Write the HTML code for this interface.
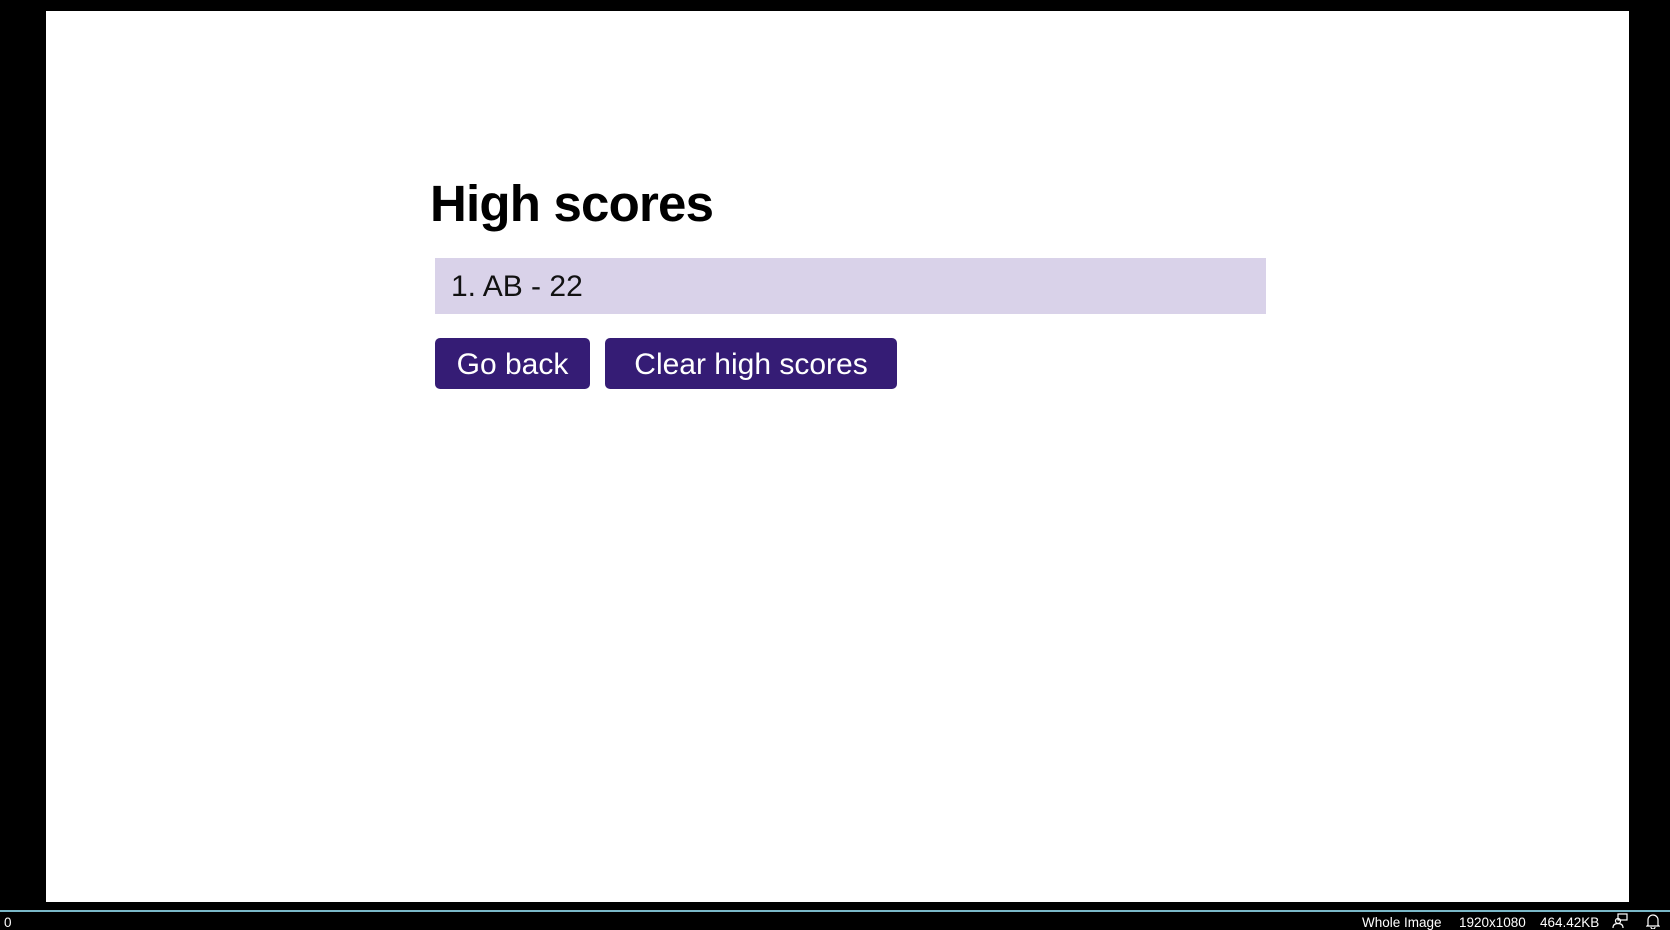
<!DOCTYPE html>
<html><head><meta charset="utf-8"><style>
html,body{margin:0;padding:0;width:1670px;height:929px;background:#000;overflow:hidden;font-family:"Liberation Sans",Arial,sans-serif;}
h1{position:absolute;left:430px;top:178px;margin:0;font-size:51px;font-weight:bold;color:#000;line-height:1;letter-spacing:-0.8px;}
.bar{position:absolute;left:435px;top:258px;width:831px;height:56px;background:#d9d2e9;}
.bar span{position:absolute;left:16px;top:14px;font-size:30px;color:#111;line-height:1;}
.btn{position:absolute;top:338px;height:51px;background:#351c75;color:#fff;border-radius:5px;font-size:30px;line-height:53px;text-align:center;}
.line{position:absolute;left:0;top:910px;width:1670px;height:2px;background:#7ab8c8;}
.sb{position:absolute;top:916px;font-size:13.5px;color:#fff;line-height:1;}
</style></head><body>
<div style="position:absolute;left:46px;top:11px;width:1583px;height:891px;background:#fff;"></div>
<h1>High scores</h1>
<div class="bar"><span>1. AB - 22</span></div>
<div class="btn" style="left:435px;width:155px;">Go back</div>
<div class="btn" style="left:605px;width:292px;">Clear high scores</div>
<div class="line"></div>
<div class="sb" style="left:4px;">0</div>
<div class="sb" style="left:1362px;">Whole Image</div>
<div class="sb" style="left:1459px;">1920x1080</div>
<div class="sb" style="left:1540px;">464.42KB</div>
<svg style="position:absolute;left:1612px;top:913px" width="16" height="16" viewBox="0 0 16 16" fill="none" stroke="#fff" stroke-width="1.2"><rect x="6" y="1" width="9" height="6"/><circle cx="6" cy="8" r="2.5"/><path d="M1 15c0-3 2-4.5 5-4.5s5 1.5 5 4.5"/></svg>
<svg style="position:absolute;left:1646px;top:913px" width="14" height="16" viewBox="0 0 14 16" fill="none" stroke="#fff" stroke-width="1.2"><path d="M2 12V7a5 5 0 0 1 10 0v5l1 1H1z"/><path d="M5 14a2 2 0 0 0 4 0"/></svg>
</body></html>
